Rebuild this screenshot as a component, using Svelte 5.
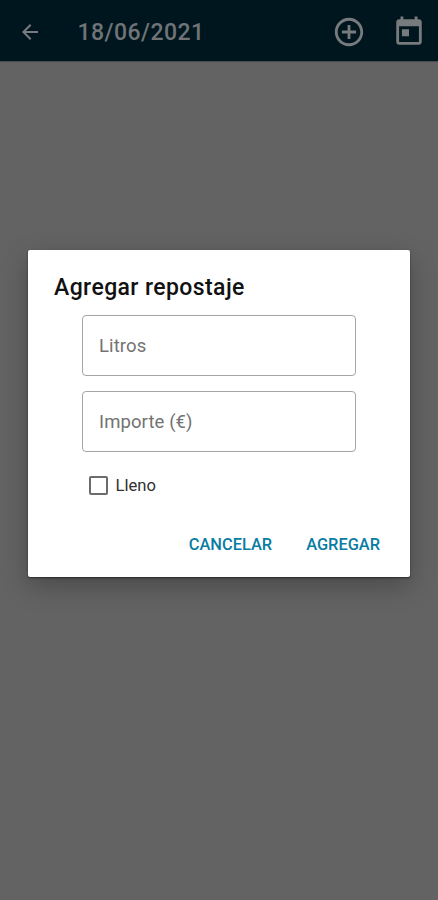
<script>
  const fields = ['Litros', 'Importe (€)'];
</script>

<div class="screen">
  <header>
    <svg class="back" viewBox="0 0 24 24" aria-label="Atrás"><path d="M20 11H7.83l5.59-5.59L12 4l-8 8 8 8 1.41-1.41L7.83 13H20v-2z" /></svg>
    <h1>18/06/2021</h1>
    <svg class="action add" viewBox="0 0 24 24" aria-label="Añadir"><path d="M13 7h-2v4H7v2h4v4h2v-4h4v-2h-4V7zm-1-5C6.48 2 2 6.48 2 12s4.480 10 10 10 10-4.480 10-10S17.520 2 12 2zm0 18c-4.410 0-8-3.590-8-8s3.590-8 8-8 8 3.590 8 8-3.590 8-8 8z" /></svg>
    <svg class="action" viewBox="0 0 24 24" aria-label="Calendario"><path d="M19 3h-1V1h-2v2H8V1H6v2H5c-1.110 0-1.990.9-1.990 2L3 19c0 1.100.890 2 2 2h14c1.100 0 2-.9 2-2V5c0-1.100-.9-2-2-2zm0 16H5V8h14v11zM7 10h5v5H7z" /></svg>
  </header>
  <main>
    <section class="dialog" role="dialog" aria-labelledby="title">
      <h2 id="title">Agregar repostaje</h2>
      <div class="fields">
        {#each fields as field}
          <div class="field"><span>{field}</span></div>
        {/each}
      </div>
      <div class="check"><i></i><span>Lleno</span></div>
      <div class="buttons">
        <button class="cancel">CANCELAR</button>
        <button class="ok">AGREGAR</button>
      </div>
    </section>
  </main>
</div>

<style>
  .screen {
    display: flex;
    flex-direction: column;
    width: 438px;
    height: 900px;
    overflow: hidden;
    background: #636363;
    font-family: Roboto, sans-serif;
  }
  header {
    display: flex;
    align-items: center;
    box-sizing: border-box;
    height: 61px;
    flex: none;
    padding: 2px 12px 0 18px;
    background: #00161f;
    box-shadow: 0 1px 1px #4b4f51;
  }
  svg { display: block; fill: #777b7e; flex: none; }
  .back { width: 24px; height: 24px; }
  h1 {
    margin: 3px auto 0 35.5px;
    font-size: 23px;
    line-height: 28px;
    font-weight: 500;
    letter-spacing: 0.45px;
    color: #707477;
    white-space: nowrap;
  }
  .action { width: 34px; height: 34px; }
  .add { margin-right: 26px; }
  main { padding: 189px 28px 0; }
  .dialog {
    box-sizing: border-box;
    height: 327px;
    padding: 24px 54px 0;
    border-radius: 2px;
    background: #fff;
    box-shadow: 0 1px 2px rgba(0, 0, 0, 0.5), 0 9px 26px rgba(0, 0, 0, 0.26);
  }
  h2 {
    margin: 0 0 13.4px -28px;
    font-size: 23px;
    line-height: 28px;
    font-weight: 500;
    letter-spacing: 0.4px;
    color: #111;
    white-space: nowrap;
  }
  .fields { display: flex; flex-direction: column; gap: 15px; }
  .field {
    box-sizing: border-box;
    display: flex;
    align-items: center;
    height: 61px;
    padding: 1px 0 0 16px;
    border: 1px solid #a5a5a5;
    border-radius: 4px;
    color: #737373;
    font-size: 18.5px;
    letter-spacing: 0.1px;
  }
  .check {
    display: flex;
    align-items: center;
    gap: 7.5px;
    height: 24px;
    margin: 21.2px 0 0 7px;
    color: #303030;
    font-size: 16.6px;
  }
  .check i {
    box-sizing: border-box;
    width: 19px;
    height: 19px;
    border: 2px solid #6c6c6c;
    border-radius: 2px;
  }
  .buttons {
    display: flex;
    justify-content: flex-end;
    gap: 34px;
    margin: 35.4px -24px 0 0;
  }
  button {
    padding: 0;
    border: 0;
    background: none;
    font: 500 16.4px/24px Roboto, sans-serif;
    color: #087ca3;
  }
</style>
